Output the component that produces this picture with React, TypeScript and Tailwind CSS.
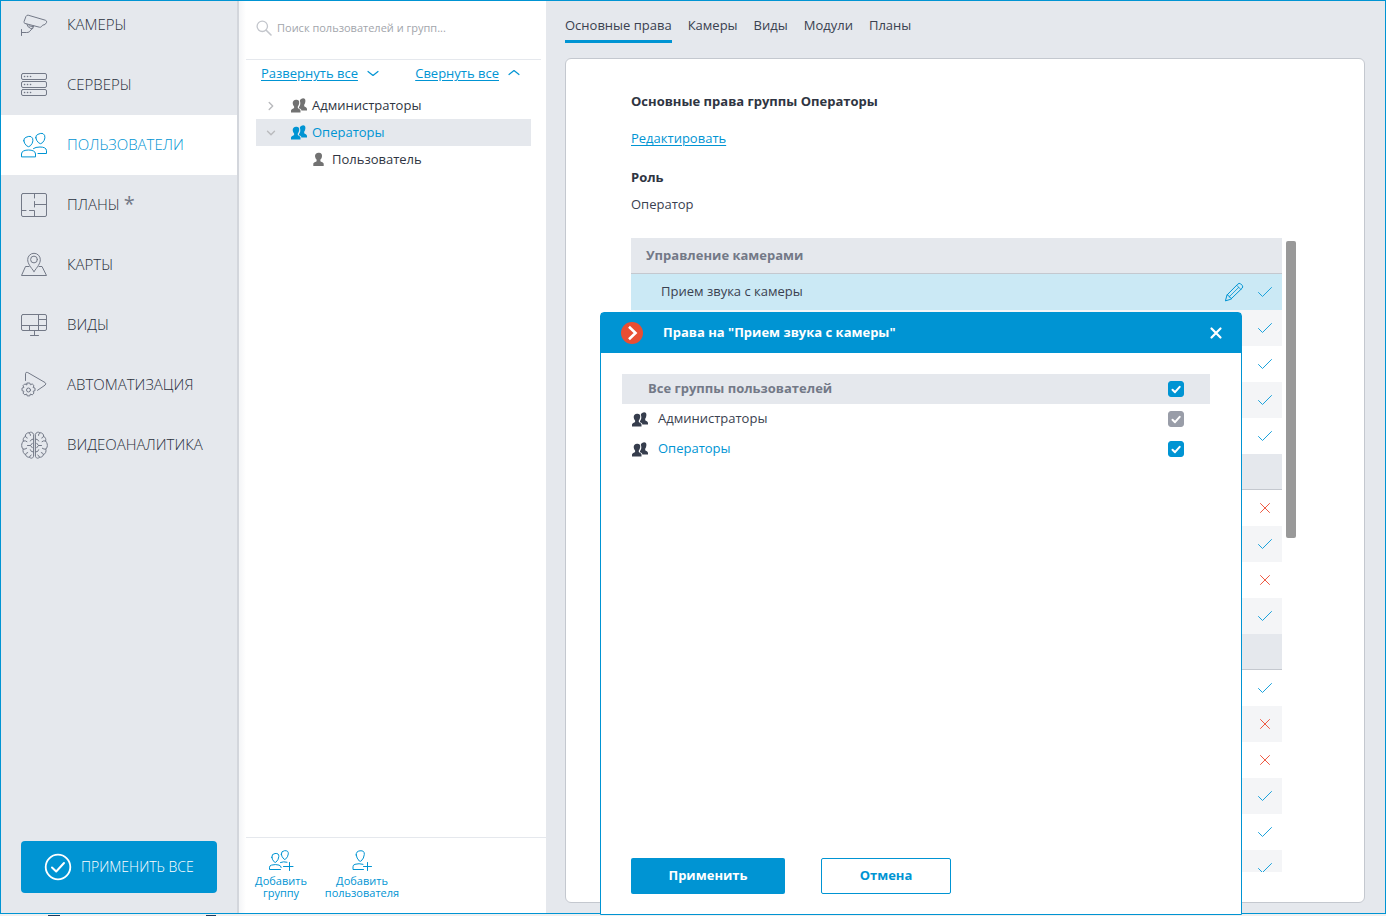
import React, { useState } from "react";

type IconProps = { className?: string };

const line = {
  fill: "none",
  stroke: "currentColor",
  strokeWidth: 1,
  strokeLinecap: "round" as const,
  strokeLinejoin: "round" as const,
  "aria-hidden": true,
};

const NavIcon = ({ children }: { children: React.ReactNode }) => (
  <svg {...line} viewBox="0 0 30 30" className="size-[30px] shrink-0">
    {children}
  </svg>
);

const CameraIcon = () => (
  <NavIcon>
    <path d="M6.2 6 Q6.8 4.9 8.2 5.2 L25.3 10.2 Q27.2 10.9 26.6 12.4 Q25.5 15.2 22.6 15.2 L21.5 16.6 Q20.6 17.5 19.4 17.2 L4.8 13.4 Q3.7 13 4 11.8 Z" />
    <path d="M1.5 19.5v6M1.5 22.5h5.2c2 0 3.3-.8 4.1-2.6l1.9-1.4.8-2.5M7 14.2l.8 2.3 3 2 1.9-.3M9 15.8l4.3.9" />
  </NavIcon>
);

const ServersIcon = () => (
  <NavIcon>
    {[3.5, 11.5, 19.5].map((y) => (
      <g key={y}>
        <rect x="1.5" y={y} width="25" height="6" rx="1.5" />
        <path d={`M4.5 ${y + 3}h.1M7.5 ${y + 3}h.1M10.5 ${y + 3}h.1`} strokeWidth="1.5" />
      </g>
    ))}
  </NavIcon>
);

const UsersIcon = () => (
  <NavIcon>
    <path d="M3.8 10.8 Q3.6 8 6 7.3 Q9 5.8 11 6.6 Q13.2 7.8 12.9 10.8 Q12.7 13.4 10.4 15.8 Q8.5 17.6 6.6 15.8 Q4.2 13.6 3.8 10.8z" />
    <path d="M1.5 26.5V24Q1.5 21.8 3.7 20.9Q5.7 20 8.5 20Q11.3 20 13.3 20.9Q15.5 21.8 15.5 24V26.5z" />
    <path d="M15.8 7.8 Q15.6 5 18 4.3 Q21 2.8 23 3.6 Q25.2 4.8 24.9 7.8 Q24.7 10.4 22.4 12.8 Q20.5 14.6 18.6 12.8 Q16.2 10.6 15.8 7.8z" />
    <path d="M13.5 18.5Q15.5 17 20 17Q22.700 17 24.5 17.8Q26.5 18.7 26.5 20.8V23.5H18" />
  </NavIcon>
);

const PlansIcon = () => (
  <NavIcon>
    <rect x="1.5" y="3.5" width="25" height="23" rx="1.5" />
    <path d="M14.5 3.5v4.5M14.5 11.5v5.5M14.5 14.5h12M1.5 20.5h4.5M9.5 20.5h5v6" />
  </NavIcon>
);

const MapsIcon = () => (
  <NavIcon>
    <path d="M14 21.5C10.5 17 7.7 13.5 7.7 9.6a6.3 6.3 0 0 1 12.6 0c0 3.9-2.8 7.4-6.3 11.9z" />
    <circle cx="14" cy="9.5" r="3.4" />
    <path d="M9 16.5H5.5L1.5 25.5h25L22 16.5h-3" />
  </NavIcon>
);

const ViewsIcon = () => (
  <NavIcon>
    <rect x="1.5" y="4.5" width="25" height="16" rx="1.5" />
    <path d="M18.5 4.5v16M1.5 15.5h25M18.5 9.5h8M9.5 15.5v5M14.5 20.5v5M10.5 25.5h8" />
  </NavIcon>
);

const AutomationIcon = () => (
  <NavIcon>
    <path d="M5.5 10.5V3.7Q5.7 1.6 7.7 2.5L25 12.5Q26.7 13.9 25 15.2L17.5 20.3" />
    <circle cx="8.5" cy="20" r="2" />
    <path d="M7.2 13h2.600l.6 1.800 1.800-.9 1.800 1.800-.9 1.800 1.900.6v2.600l-1.900.6.9 1.800-1.800 1.800-1.800-.9-.6 1.900H7.200l-.6-1.900-1.800.9L3 23.100l.9-1.800-1.900-.6v-2.600l1.900-.6L3 15.700l1.800-1.800 1.800.9z" />
  </NavIcon>
);

const BrainHalf = () => (
  <>
    <path d="M13.5 3.5C13 1.8 10.6 1 9.2 2.3 6.8 2 5.2 3.8 5.4 5.8 3.5 6.8 2.8 8.8 3.4 10.5 1.8 12.3 1.3 14.6 1.9 16.5c.2 1 .7 1.6 1.3 2.1-.7 2.3.3 4.7 2.3 5.5.6 2 2.3 2.9 4 2.6 1.7 1.8 3.7 1 4-.8z" />
    <path d="M5.4 5.8q.4 1.5 1.8 1.8M9.2 2.3q1.5.8 1.3 2.6M13.5 8.5q-2.5-.2-3.2 2M3.4 10.5q2-.8 3.6.6M7.5 15h3l1.8-2.3M10.5 15l1.8 2.3M3.2 18.6q1.8.6 3.5-.8M13.5 21.5q-2.8.3-3.2-2.2M5.5 24.1q.3-1.8 2.2-2.1M9.5 26.7q.3-1.7 1.7-2.2" />
  </>
);

const BrainIcon = () => (
  <NavIcon>
    <g transform="translate(0 .5)">
      <BrainHalf />
      <g transform="translate(29 0) scale(-1 1)">
        <BrainHalf />
      </g>
    </g>
  </NavIcon>
);

const PeopleGlyph = ({ className = "" }: IconProps) => (
  <svg viewBox="0 0 16 15" fill="currentColor" className={`h-[15px] w-4 shrink-0 ${className}`} aria-hidden>
    <path d="M8.800 2.900C9 1.200 10.200.500 11.500.400c2-.300 3.100 1 2.900 2.900-.1 1.500-.5 2.600-1.200 3.400v1.600c.7.800 2.800.9 2.800 2.700V12.400H10.400c-.2-1.300-1.200-1.700-2.400-2.100V9c.9-1 1.400-2.400 1.300-3.800 0-.9-.1-1.600-.5-2.300z" />
    <path d="M5 1.700C7.100 1.400 8.400 2.700 8.200 4.800 8.100 6.400 7.600 7.600 6.800 8.400v1.500c.6.800 2.700.9 2.700 2.700V14.500H0v-1.900c0-1.800 2.300-1.900 3.100-2.700V8.400C2.300 7.600 1.800 6.400 1.700 4.900c0-1.900 1.300-3.100 3.300-3.200z" />
  </svg>
);

const PersonGlyph = () => (
  <svg viewBox="0 0 11 15" fill="currentColor" className="h-[15px] w-[11px] shrink-0 text-[#727272]" aria-hidden>
    <path d="M5.500.700C7.900.400 9.200 1.700 9 3.900 8.900 5.600 8.300 6.800 7.400 7.600v1.600c.7.800 3.300.9 3.300 2.700V14H.300v-2.100c0-1.800 2.600-1.900 3.300-2.700V7.600C2.700 6.800 2.100 5.600 2 4 2 2.100 3.400.900 5.500.700z" />
  </svg>
);

const Tick = () => (
  <svg {...line} viewBox="0 0 16 12" className="inline-block h-3 w-4 text-[#1ba2dc]" aria-hidden={false} role="img" aria-label="Разрешено">
    <path d="M1.500 6.500l4 4 9-9" />
  </svg>
);

const Cross = () => (
  <svg {...line} viewBox="0 0 16 12" className="inline-block h-3 w-4 text-[#ef5a43]" aria-hidden={false} role="img" aria-label="Запрещено">
    <path d="M3.500 1.500l9 9M12.500 1.500l-9 9" />
  </svg>
);

const Pencil = () => (
  <svg {...line} viewBox="0 0 20 20" className="size-5 text-[#0094d3]">
    <path d="M1.500 18.500l1.500-5.500L13.800 2.100q1.300-1.300 2.800-.3l1.700 1.700q1 1.500-.3 2.800L7 17z" />
    <path d="M3 13l1.700.4.600 1.800 1.500.300.400 1.500M5.200 14.800l9.500-9.400M12.700 3.300l4.200 4.200" strokeWidth="0.8" />
  </svg>
);

const LinkChevron = ({ className = "" }: IconProps) => (
  <svg {...line} viewBox="0 0 12 8" className={`h-2 w-3 shrink-0 ${className}`} strokeWidth={1.2}>
    <path d="M1 2.500l5 4 5-4" />
  </svg>
);

const TreeChevron = ({ className = "" }: IconProps) => (
  <svg {...line} viewBox="0 0 12 8" className={`h-2 w-3 shrink-0 text-[#b9babd] ${className}`} strokeWidth={1.4}>
    <path d="M2.500 2.200l3.500 3.500 3.500-3.500" />
  </svg>
);

const navItems = [
  { label: "КАМЕРЫ", icon: <CameraIcon /> },
  { label: "СЕРВЕРЫ", icon: <ServersIcon /> },
  { label: "ПОЛЬЗОВАТЕЛИ", icon: <UsersIcon />, active: true },
  { label: "ПЛАНЫ", icon: <PlansIcon />, changed: true },
  { label: "КАРТЫ", icon: <MapsIcon /> },
  { label: "ВИДЫ", icon: <ViewsIcon /> },
  { label: "АВТОМАТИЗАЦИЯ", icon: <AutomationIcon /> },
  { label: "ВИДЕОАНАЛИТИКА", icon: <BrainIcon /> },
];

const Sidebar = () => (
  <aside className="flex w-[238px] shrink-0 flex-col overflow-hidden border-r-2 border-[#d3d6dc] bg-[#e5e8ed]">
    <nav className="-mt-1.5 flex-1">
      {navItems.map((item) => (
        <a
          key={item.label}
          href="#"
          className={`flex h-[60px] items-center gap-[17px] pl-[19px] text-[15px] leading-5 font-[350] ${
            item.active ? "bg-white text-[#0094d3]" : "text-[#2a303c]"
          }`}
        >
          <span className={item.active ? "" : "text-[#737987]"}>{item.icon}</span>
          <span className="flex gap-1 pb-0.5">
            {item.label}
            {item.changed && <span className="text-xl leading-5 font-normal text-[#737987]">*</span>}
          </span>
        </a>
      ))}
    </nav>
    <button
      type="button"
      className="mr-5 mb-5 ml-5 flex h-[52px] items-center gap-2 rounded bg-[#0094d3] pl-[22px] text-[14px] font-[350] text-white"
    >
      <svg {...line} viewBox="0 0 30 30" className="size-[30px] shrink-0" strokeWidth={1.8}>
        <circle cx="15" cy="15" r="12.300" />
        <path d="M9 15.500l4.200 4L21 11" strokeWidth="2" />
      </svg>
      <span className="pb-0.5">ПРИМЕНИТЬ ВСЕ</span>
    </button>
  </aside>
);

const UserTree = () => (
  <section className="flex w-[307px] shrink-0 flex-col bg-linear-to-r from-[#f4f5f7] to-white to-[7px]">
    <label className="mr-[5px] ml-[7px] flex h-[59px] shrink-0 items-center gap-[5px] border-b border-[#e5e8ed] pb-1 pl-2.5">
      <svg {...line} viewBox="0 0 16 16" className="size-4 shrink-0 text-[#c3c6cc]" strokeWidth={1.3}>
        <circle cx="6.300" cy="6.300" r="5.200" />
        <path d="M10.200 10.200l4.800 4.800" strokeWidth="1.600" />
      </svg>
      <input
        type="text"
        aria-label="Поиск"
        placeholder="Поиск пользователей и групп..."
        className="min-w-0 flex-1 bg-transparent text-[11px] leading-4 outline-none placeholder:text-[#a2a5ab]"
      />
    </label>
    <div className="flex justify-between pt-[3px] pr-[26px] pl-[22px] text-[#0094d3]">
      <button type="button" className="flex items-center gap-[9px]">
        <span className="leading-5 underline underline-offset-2">Развернуть все</span>
        <LinkChevron />
      </button>
      <button type="button" className="flex items-center gap-[9px]">
        <span className="leading-5 underline underline-offset-2">Свернуть все</span>
        <LinkChevron className="rotate-180" />
      </button>
    </div>
    <ul className="mt-[9px] mr-[15px] ml-[17px] flex-1 text-[#2f3542]">
      <li className="flex h-[27px] items-center pl-[9px]">
        <TreeChevron className="-rotate-90" />
        <PeopleGlyph className="mr-[5px] ml-3.5 text-[#727272]" />
        Администраторы
      </li>
      <li>
        <div className="flex h-[27px] items-center bg-[#e5e8ed] pl-[9px] text-[#0094d3]">
          <TreeChevron />
          <PeopleGlyph className="mr-[5px] ml-3.5" />
          Операторы
        </div>
        <ul>
          <li className="flex h-[27px] items-center gap-2 pl-[57px]">
            <PersonGlyph />
            Пользователь
          </li>
        </ul>
      </li>
    </ul>
    <div className="ml-[7px] flex h-[76px] shrink-0 gap-4 border-t border-[#e5e8ed] pt-3 pl-2 text-[11px] leading-3 text-[#0094d3]">
      <button type="button" className="flex w-[54px] flex-col items-center gap-1">
        <svg {...line} viewBox="0 0 26 21" className="h-[21px] w-[26px] shrink-0">
          <path d="M3.800 7.300Q3.600 3.600 7 3.500Q11.200 3 10.800 6.700Q10.500 10 7.900 12.200Q7.200 12.700 6.500 12.200Q4.200 10 3.800 7.300zM13.300 4.300Q13 1 16.500.700Q20.600.300 20.300 3.900Q20 7 17.500 9.200Q16.800 9.700 16 9.200Q13.700 7 13.300 4.300z" />
          <path d="M12.500 19.500H1.500v-2.300q0-1.500 2-2.100 4-1.100 7.500 0 2 .6 2.200 2.400M12.500 12.500q3-1.300 6.500-.3M15.500 16.500h9.500M21.500 12.500v8" />
        </svg>
        Добавить группу
      </button>
      <button type="button" className="flex w-[76px] flex-col items-center gap-1">
        <svg {...line} viewBox="0 0 22 21" className="h-[21px] w-[22px] shrink-0">
          <path d="M5.200 5Q4.900 1.200 9 .800Q13.700.300 13.300 4.500Q13 8.300 10.200 11Q9.300 11.700 8.300 11Q5.600 8.300 5.200 5z" />
          <path d="M12.500 19.500H2v-2.800q0-1.800 2-2.400 4-1.200 8 0M12.500 16.500h8M16.500 12.500v8" />
        </svg>
        Добавить пользователя
      </button>
    </div>
  </section>
);

type Row = { title?: string; head?: boolean; allowed?: boolean; shaded?: boolean; current?: boolean };

const rows: Row[] = [
  { head: true, title: "Управление камерами" },
  { title: "Прием звука с камеры", allowed: true, current: true },
  { allowed: true, shaded: true },
  { allowed: true },
  { allowed: true, shaded: true },
  { allowed: true },
  { head: true },
  { allowed: false },
  { allowed: true, shaded: true },
  { allowed: false },
  { allowed: true, shaded: true },
  { head: true },
  { allowed: true },
  { allowed: false, shaded: true },
  { allowed: false },
  { allowed: true, shaded: true },
  { allowed: true },
  { allowed: true, shaded: true },
];

const RightsTable = () => (
  <div className="mt-6 flex min-h-0 flex-1 items-start gap-1">
    <div className="h-full min-w-0 flex-1 overflow-hidden">
      <table className="w-full border-separate border-spacing-0">
        <tbody>
          {rows.map((row, i) =>
            row.head ? (
              <tr key={i}>
                <th
                  colSpan={3}
                  scope="colgroup"
                  className="h-9 border-b border-[#c4c8cf] bg-[#e5e8ed] pb-0.5 pl-[15px] text-left text-[#737987]"
                >
                  {row.title}
                </th>
              </tr>
            ) : (
              <tr key={i} className={row.current ? "bg-[#cbe9f5]" : row.shaded ? "bg-[#f4f5f7]" : "bg-white"}>
                <td className="h-9 pb-0.5 pl-[30px]">{row.title}</td>
                <td className="w-[33px]">
                  {row.current && (
                    <button type="button" aria-label="Изменить" className="block">
                      <Pencil />
                    </button>
                  )}
                </td>
                <td className="w-[25px] pb-0.5 leading-none">{row.allowed ? <Tick /> : <Cross />}</td>
              </tr>
            ),
          )}
        </tbody>
      </table>
    </div>
    <div className="mt-[3px] h-[297px] w-2.5 rounded-[2px] bg-[#999999]" />
  </div>
);

const tabs = ["Основные права", "Камеры", "Виды", "Модули", "Планы"];

const Main = () => (
  <main className="flex min-w-0 flex-1 flex-col bg-[#e5e8ed] pr-5 pb-2.5 pl-[19px]">
    <nav className="flex h-[57px] shrink-0 items-start gap-4 pt-3.5">
      {tabs.map((tab, i) => (
        <a
          key={tab}
          href="#"
          className={`h-7 leading-5 ${i === 0 ? "border-b-3 border-[#0094d3]" : ""}`}
        >
          {tab}
        </a>
      ))}
    </nav>
    <div className="flex min-h-0 flex-1 flex-col rounded-md border border-[#c4c8cf] bg-white pt-8 pr-[68px] pb-[30px] pl-[65px] leading-5">
      <h1 className="font-bold text-[#2f3542]">Основные права группы Операторы</h1>
      <a href="#" className="mt-[17px] self-start text-[#0094d3] underline underline-offset-2">
        Редактировать
      </a>
      <h2 className="mt-[19px] font-bold text-[#2f3542]">Роль</h2>
      <p className="mt-[7px]">Оператор</p>
      <RightsTable />
    </div>
  </main>
);

const CheckBox = ({ id, disabled = false }: { id: string; disabled?: boolean }) => {
  const [on, setOn] = useState(true);
  return (
    <span className="grid size-4">
      <input
        id={id}
        type="checkbox"
        checked={on}
        disabled={disabled}
        onChange={() => setOn(!on)}
        className="col-start-1 row-start-1 size-4 appearance-none rounded-[3px] border border-[#0094d3] checked:bg-[#0094d3] disabled:border-[#999da8] disabled:bg-[#999da8]"
      />
      {on && (
        <svg {...line} viewBox="0 0 16 16" className="pointer-events-none col-start-1 row-start-1 size-4 text-white" strokeWidth={2}>
          <path d="M4.500 8.800l2.500 2.400 4.700-5.400" />
        </svg>
      )}
    </span>
  );
};

const RightsDialog = () => (
  <div
    role="dialog"
    aria-labelledby="dialog-title"
    className="absolute top-[312px] bottom-px left-[600px] flex w-[642px] flex-col rounded-t border border-[#0094d3] bg-white"
  >
    <header className="flex h-10 shrink-0 items-center bg-[#0094d3] pr-[18px] pl-5 text-white">
      <svg viewBox="0 0 22 22" className="size-[22px] shrink-0" aria-hidden>
        <circle cx="11" cy="11" r="11" fill="#e94e32" />
        <path d="M8 4.800l6.500 6.200L8 17.200" fill="none" stroke="#fff" strokeWidth="2.600" />
      </svg>
      <h2 id="dialog-title" className="ml-5 flex-1 font-bold">
        Права на "Прием звука с камеры"
      </h2>
      <button type="button" aria-label="Закрыть" className="block">
        <svg {...line} viewBox="0 0 14 14" className="size-3.5" strokeWidth={2.2}>
          <path d="M2.500 2.500l9 9M11.500 2.500l-9 9" />
        </svg>
      </button>
    </header>
    <div className="mt-[21px] mr-[31px] ml-[21px] flex-1">
      <div className="flex h-[30px] items-center bg-[#e5e8ed] pr-[26px] pl-[26px] font-bold text-[#737987]">
        <label htmlFor="all-groups" className="flex-1">
          Все группы пользователей
        </label>
        <CheckBox id="all-groups" />
      </div>
      <div className="flex h-[30px] items-center pr-[26px] pl-2.5">
        <PeopleGlyph className="mr-2.5 text-[#363d4d]" />
        <label htmlFor="group-admins" className="flex-1">
          Администраторы
        </label>
        <CheckBox id="group-admins" disabled />
      </div>
      <div className="flex h-[30px] items-center pr-[26px] pl-2.5">
        <PeopleGlyph className="mr-2.5 text-[#363d4d]" />
        <label htmlFor="group-operators" className="flex-1 text-[#0094d3]">
          Операторы
        </label>
        <CheckBox id="group-operators" />
      </div>
    </div>
    <footer className="flex gap-9 pb-5 pl-[30px] font-bold">
      <button type="button" className="h-9 w-[154px] rounded-[2px] bg-[#0094d3] text-white">
        Применить
      </button>
      <button type="button" className="h-9 w-[130px] rounded-[2px] border border-[#0094d3] text-[#0094d3]">
        Отмена
      </button>
    </footer>
  </div>
);

export default function App() {
  return (
    <div className="relative flex h-screen min-h-[600px] flex-col bg-[#f0f0f0] font-['Open_Sans','Noto_Sans',sans-serif] text-[13px] text-[#3a4150]">
      <div className="flex min-h-0 flex-1 border border-[#0094d3]">
        <Sidebar />
        <UserTree />
        <Main />
      </div>
      <div className="flex h-0.5 shrink-0 items-end pl-12">
        <span className="h-px w-3 bg-[#1d3a5c]" />
        <span className="ml-[146px] h-px w-2.5 bg-[#1d3a5c]" />
      </div>
      <RightsDialog />
    </div>
  );
}
